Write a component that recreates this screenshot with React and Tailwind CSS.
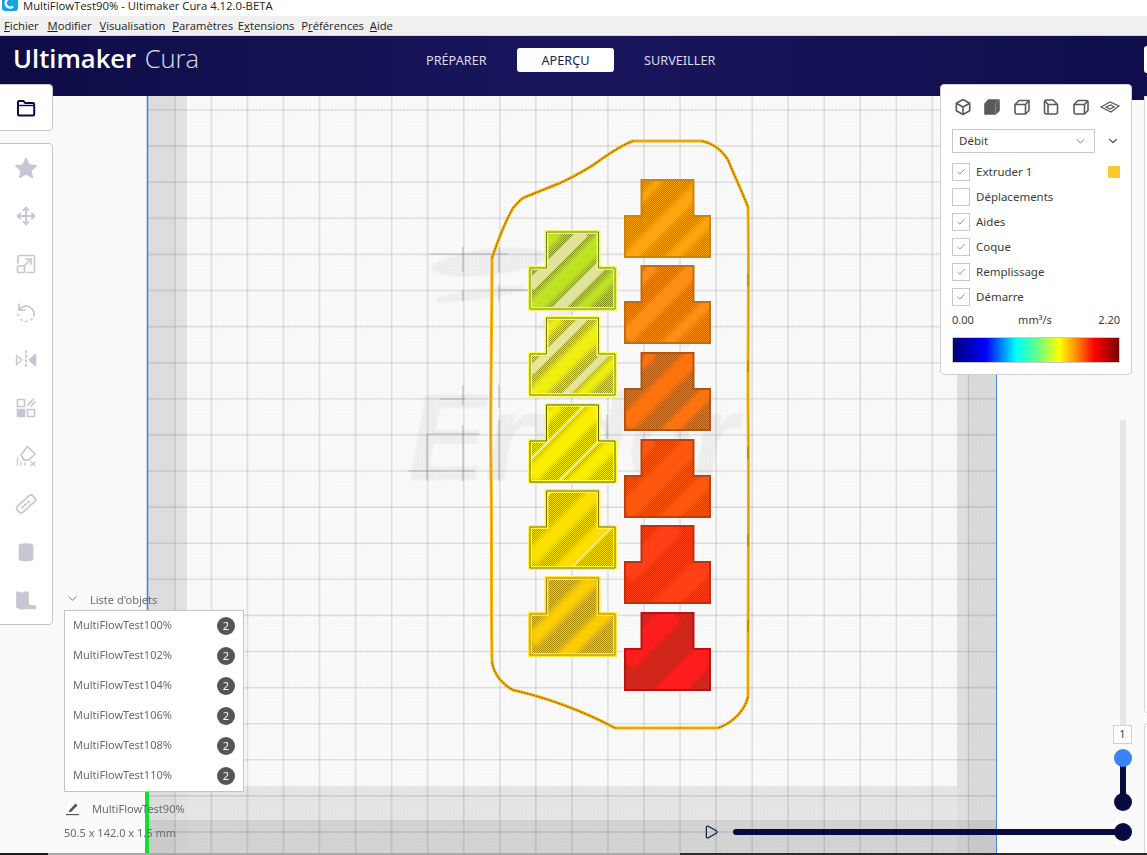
import React from 'react';
import { ChevronDown, Check, Move, Play } from 'lucide-react';

const MENU = [
  { a: 'F', rest: 'ichier', mid: '', gap: 'mr-[2px]' },
  { a: 'M', rest: 'odifier', mid: '', gap: 'mr-[1px]' },
  { a: 'V', rest: 'isualisation', mid: '', gap: '' },
  { a: 'P', rest: 'aramètres', mid: '', gap: '-mr-[2px]' },
  { a: 'E', rest: 'tensions', mid: 'x', gap: '' },
  { a: 'P', rest: 'éférences', mid: 'r', gap: '-mr-[1px]' },
  { a: 'A', rest: 'ide', mid: '', gap: '' },
];

const OBJECTS = ['100', '102', '104', '106', '108', '110'];

const LAYERS = [
  { label: 'Extruder 1', on: true, swatch: true },
  { label: 'Déplacements', on: false },
  { label: 'Aides', on: true },
  { label: 'Coque', on: true },
  { label: 'Remplissage', on: true },
  { label: 'Démarre', on: true },
];

// pieces imprimees, colonne gauche puis colonne droite
const LEFT_PARTS = [
  { x: 530, y: 232, fill: '#bfe422', light: '#eef566', dark: '#66780f', o: 0.45, bands: [[80, 16], [28, 12], [128, 10]], pale: [[54, 11, '#e2e39a'], [105, 11, '#e2e39a']] },
  { x: 530, y: 318, fill: '#eef010', light: '#f8fc5a', dark: '#66660c', o: 0.45, bands: [[82, 16], [30, 10], [128, 10]], pale: [[54, 8, '#e6e69a'], [112, 7, '#e6e69a']] },
  { x: 530, y: 405, fill: '#fbee00', light: '#fcfa46', dark: '#4d4d00', o: 0.45, bands: [[72, 16], [122, 14], [30, 10]], pale: [[55, 3, '#efeb9a'], [105, 3, '#efeb9a']] },
  { x: 530, y: 491, fill: '#fde000', light: '#fff446', dark: '#6d5f00', o: 0.42, bands: [[68, 16], [110, 14]], pale: [[22, 2, '#f0e59a'], [118, 2, '#f0e59a']] },
  { x: 530, y: 578, fill: '#fbcc00', light: '#ffe63a', dark: '#9a7800', o: 0.4, bands: [[64, 15], [112, 14]], pale: [] },
];

const RIGHT_PARTS = [
  { x: 625, y: 180, fill: '#ffa510', dark: '#c98412', o: 0.38, bands: [[82, 14], [125, 12], [35, 8]] },
  { x: 625, y: 266, fill: '#ff8e14', dark: '#bd6e18', o: 0.38, bands: [[72, 16], [120, 12], [30, 10]] },
  { x: 625, y: 353, fill: '#ff7310', dark: '#b05610', o: 0.38, bands: [[72, 18], [122, 14], [28, 10]] },
  { x: 625, y: 440, fill: '#ff5810', dark: '#bb4210', o: 0.34, bands: [[72, 20], [122, 16], [28, 12]] },
  { x: 625, y: 526, fill: '#ff3f15', dark: '#c03010', o: 0.3, bands: [[50, 20], [118, 22]] },
  { x: 625, y: 613, fill: '#ff1c1a', dark: '#b81212', o: 0.26, bands: [[48, 24], [122, 24]] },
];

const T_PATH = 'M16.5 0H68.5V36H85V77H0V36H16.5Z';
const SKIRT = 'M633 141H702C712 143 722 150 728 160C733 172 742 192 748 207C749 260 748 330 748 400C749 500 748 600 748 697C744 712 732 723 718 728H615C585 712 548 698 513 690C502 684 494 674 492 662C491 600 492 540 491 470C490 400 492 330 492 258C498 240 505 222 513 208C518 203 520 200 523 198C535 193 548 188 560 183C575 176 590 168 603 158C612 152 622 145 633 141Z';
// parties en biais de la jupe, la ou le trait parait hachure
const SKIRT_HATCHED = [
  'M492 258C498 240 505 222 513 208C518 203 520 200 523 198C535 193 548 188 560 183C575 176 590 168 603 158C612 152 622 145 633 141',
  'M702 141C712 143 722 150 728 160C733 172 742 192 748 207',
  'M748 697C744 712 732 723 718 728',
  'M615 728C585 712 548 698 513 690C502 684 494 674 492 662',
];

function Part({ part, light }) {
  return (
    <g transform={`translate(${part.x} ${part.y})`}>
      <g clipPath="url(#t-shape)">
        <rect width="86" height="78" fill={part.fill} />
        <rect width="86" height="78" fill="url(#dither)" opacity={part.o} />
        <g filter="url(#soft)">
          {part.bands.map(([c, w]) => (
            <line key={c} x1="0" y1={c} x2={c} y2="0" stroke={part.fill} strokeWidth={w} />
          ))}
        </g>
        {(part.pale || []).map(([c, w, color]) => (
          <line key={c} x1="0" y1={c} x2={c} y2="0" stroke={color} strokeWidth={w} />
        ))}
      </g>
      {light && <path d={T_PATH} fill="none" stroke={part.light} strokeWidth="4" />}
      <path d={T_PATH} fill="none" stroke={part.dark} strokeWidth={light ? 0.9 : 2} />
    </g>
  );
}

function BuildPlate() {
  const xs = Array.from({ length: 23 }, (_, i) => 175.3 + i * 36.05);
  const ys = Array.from({ length: 21 }, (_, i) => 110 + i * 36.1);
  return (
    <svg className="absolute left-0 top-[96px]" width="1147" height="759" viewBox="0 96 1147 759">
      <defs>
        <pattern id="dither" width="2" height="2" patternUnits="userSpaceOnUse">
          <rect width="1" height="1" fill="#2a2000" />
          <rect x="1" y="1" width="1" height="1" fill="#2a2000" />
        </pattern>
        <pattern id="minor" width="3.6" height="3.6" patternUnits="userSpaceOnUse">
          <rect width="3.6" height="0.6" fill="#000" opacity="0.014" />
          <rect width="0.6" height="3.6" fill="#000" opacity="0.014" />
        </pattern>
        <clipPath id="t-shape">
          <path d={T_PATH} />
        </clipPath>
        <filter id="soft" x="-20%" y="-20%" width="140%" height="140%">
          <feGaussianBlur stdDeviation="2.2" />
        </filter>
        <filter id="blur-wm" x="-20%" y="-20%" width="140%" height="140%">
          <feGaussianBlur stdDeviation="1" />
        </filter>
      </defs>

      <rect x="148" y="96" width="848" height="759" fill="#fafafa" />
      <rect x="148" y="96" width="848" height="759" fill="url(#minor)" />

      {/* zones interdites du plateau */}
      <rect x="148" y="96" width="39" height="759" fill="#000" opacity="0.09" />
      <rect x="957" y="96" width="39" height="759" fill="#000" opacity="0.1" />
      <rect x="187" y="786" width="770" height="69" fill="#000" opacity="0.08" />
      <rect x="148" y="820" width="848" height="35" fill="#000" opacity="0.08" />
      <rect x="148" y="96" width="27" height="759" fill="#000" opacity="0.02" />
      <rect x="968" y="96" width="28" height="759" fill="#000" opacity="0.02" />

      {xs.map((x) => (
        <line key={x} x1={x} y1="96" x2={x} y2="855" stroke="#000" strokeOpacity="0.1" strokeWidth="1.6" />
      ))}
      {ys.map((y) => (
        <line key={y} x1="148" y1={y} x2="996" y2={y} stroke="#000" strokeOpacity="0.1" strokeWidth="1.6" />
      ))}

      {/* filigrane sous le plateau */}
      <g opacity="0.05" filter="url(#blur-wm)">
        <ellipse cx="490" cy="262" rx="58" ry="13" fill="#222" transform="rotate(-6 490 262)" />
        <ellipse cx="480" cy="294" rx="46" ry="5" fill="#222" transform="rotate(-8 480 294)" />
        <ellipse cx="580" cy="300" rx="50" ry="8" fill="#222" transform="rotate(-35 580 300)" />
        <ellipse cx="662" cy="330" rx="32" ry="7" fill="#222" transform="rotate(30 662 330)" />
        <text x="408" y="480" textLength="330" lengthAdjust="spacingAndGlyphs" fontFamily="Liberation Sans" fontStyle="italic" fontWeight="700" fontSize="125" fill="#222">
          Ender
        </text>
      </g>
      <g stroke="#8c8c8c" strokeOpacity="0.5" strokeWidth="1.2">
        <line x1="430" y1="254" x2="508" y2="254" />
        <line x1="463" y1="247" x2="463" y2="272" />
        <line x1="499" y1="247" x2="499" y2="272" />
        <line x1="500" y1="290" x2="530" y2="290" />
        <line x1="463" y1="290" x2="463" y2="301" />
        <line x1="499" y1="285" x2="499" y2="301" />
        <line x1="440" y1="399" x2="465" y2="399" />
        <line x1="463" y1="385" x2="463" y2="405" />
        <line x1="499" y1="385" x2="499" y2="408" />
        <line x1="427" y1="434" x2="480" y2="434" />
        <line x1="427" y1="434" x2="427" y2="481" />
        <line x1="463" y1="425" x2="463" y2="481" />
        <line x1="408" y1="471" x2="475" y2="471" />
        <line x1="499" y1="420" x2="499" y2="481" />
        <line x1="607" y1="415" x2="607" y2="440" />
        <line x1="535" y1="290" x2="535" y2="300" />
      </g>

      {/* jupe */}
      <path d={SKIRT} fill="none" stroke="#f7b40a" strokeWidth="3" />
      <path d={SKIRT} fill="none" stroke="#dd9a00" strokeWidth="1" />
      {SKIRT_HATCHED.map((d) => (
        <path key={d} d={d} fill="none" stroke="#6e4a00" strokeOpacity="0.75" strokeWidth="1.1" strokeDasharray="1.5 1.5" />
      ))}
      <g stroke="#c98f00" strokeWidth="2">
        <line x1="748" y1="274" x2="748" y2="286" />
        <line x1="748" y1="360" x2="748" y2="372" />
        <line x1="748" y1="447" x2="748" y2="459" />
        <line x1="748" y1="534" x2="748" y2="546" />
        <line x1="748" y1="620" x2="748" y2="632" />
      </g>

      {LEFT_PARTS.map((p) => (
        <Part key={p.y} part={p} light />
      ))}
      {RIGHT_PARTS.map((p) => (
        <Part key={p.y} part={p} />
      ))}

      <line x1="147.5" y1="96" x2="147.5" y2="790" stroke="#3f86dd" strokeWidth="1.6" />
      <line x1="996.5" y1="96" x2="996.5" y2="855" stroke="#4a8bd8" strokeWidth="1" />
      <line x1="147" y1="789" x2="147" y2="855" stroke="#10e030" strokeWidth="4" />
    </svg>
  );
}

function ToolIcon({ children }) {
  return (
    <div className="flex h-[48px] w-full items-center justify-center">
      <svg width="24" height="24" viewBox="0 0 24 24" fill="none" stroke="#c6c6d4" strokeWidth="1.7" strokeLinecap="round" strokeLinejoin="round">
        {children}
      </svg>
    </div>
  );
}

function LeftTools() {
  return (
    <>
      <div className="absolute left-[-1px] top-[84px] flex h-[47px] w-[54px] items-center justify-center rounded-r-[4px] border border-[#c8c8c8] bg-white">
        <svg width="20" height="18" viewBox="0 0 20 18" fill="none" stroke="#0a0d45" strokeWidth="2" strokeLinejoin="round">
          <path d="M2 15.5V3.2C2 2.5 2.5 2 3.2 2H7.5L9 4H17C17.7 4 18.2 4.5 18.2 5.2V15.3C18.2 16 17.7 16.5 17 16.5H3C2.4 16.5 2 16.1 2 15.5Z" />
          <path d="M2 6.5H18" strokeWidth="1.4" />
        </svg>
      </div>
      <div className="absolute left-[-1px] top-[143px] flex h-[482px] w-[54px] flex-col rounded-r-[4px] border border-[#c8c8c8] bg-white pt-[0.5px]">
        <ToolIcon>
          <path d="M12 2.5L15 9L22 9.8L16.8 14.4L18.2 21.3L12 17.8L5.8 21.3L7.2 14.4L2 9.8L9 9Z" fill="#c6c6d4" />
        </ToolIcon>
        <div className="flex h-[48px] w-full items-center justify-center">
          <Move size={20} color="#c6c6d4" strokeWidth={2.2} />
        </div>
        <ToolIcon>
          <path d="M4 11V5C4 4 4.8 3.5 5.5 3.5H19C20 3.5 20.5 4.2 20.5 5V19C20.5 20 20 20.5 19 20.5H13" />
          <rect x="3.5" y="14" width="7" height="6.5" rx="1" />
          <path d="M10 14L17 7M12 7H17V12" />
        </ToolIcon>
        <ToolIcon>
          <path d="M5 4V10H11" />
          <path d="M5.5 9.5C8 6.5 12 5.5 15.5 7C19.5 9 21 13 19.8 16" />
          <path d="M18 19L16.5 20.2M13 21.3H11.5M8 20.2L6.5 19M4.2 15.5L3.8 13.5" strokeDasharray="1 2" />
        </ToolIcon>
        <ToolIcon>
          <path d="M12 3V21" strokeDasharray="1.5 3" strokeWidth="2" />
          <path d="M2.5 7.5L8 12L2.5 16.5Z" strokeWidth="1.3" />
          <path d="M21.5 6.5L15.5 12L21.5 17.5Z" fill="#c6c6d4" />
        </ToolIcon>
        <ToolIcon>
          <rect x="3.5" y="3.5" width="7" height="7" />
          <rect x="13.5" y="13.5" width="7" height="7" />
          <rect x="3.5" y="13.5" width="7" height="7" fill="#c6c6d4" />
          <path d="M14 9L19 3.5M17 10L21 6" />
        </ToolIcon>
        <ToolIcon>
          <path d="M13.5 2.5L21 10L15 16H10L7 11Z" />
          <path d="M3.5 14V21M7 18V21M11 19V21" strokeWidth="1.3" />
          <path d="M17 18L21 21.5M21 18L17 21.5" strokeWidth="1.3" />
        </ToolIcon>
        <ToolIcon>
          <rect x="1.5" y="8" width="21" height="8" rx="2.5" transform="rotate(-42 12 12)" />
          <path d="M8 15.5L9 14.5M11 13L12 12M14 10.5L15 9.5" strokeWidth="2" />
        </ToolIcon>
        <ToolIcon>
          <path d="M5.5 5.5C5.5 3.5 18.5 3.5 18.5 5.5V19C18.5 21 5.5 21 5.5 19Z" fill="#c6c6d4" />
        </ToolIcon>
        <ToolIcon>
          <path d="M3 4L8 5.5L12 4L14 5V16.5L17 18H21V20.5H15L12 20L8 21L3 19Z" fill="#c6c6d4" />
        </ToolIcon>
      </div>
    </>
  );
}

function ObjectList() {
  return (
    <div className="absolute left-[64px] top-[590px] w-[180px] text-[11px] text-[#6b6b6b]">
      <div className="flex h-[20px] items-center">
        <ChevronDown size={15} strokeWidth={1.4} className="ml-[1px] -mt-[3px]" />
        <span className="ml-[10px]">Liste d'objets</span>
      </div>
      <div className="flex flex-col border border-[#c4c4c4] bg-white">
        {OBJECTS.map((n) => (
          <div key={n} className="flex h-[30px] items-center justify-between pl-[8px] pr-[8px]">
            <span className="-mt-[1px]">MultiFlowTest{n}%</span>
            <span className="flex h-[18px] w-[18px] items-center justify-center rounded-full bg-[#555555] text-[11px] text-white">2</span>
          </div>
        ))}
      </div>
      <div className="mt-[7px] flex h-[20px] items-center pl-[2px]">
        <svg width="13" height="14" viewBox="0 0 13 14" fill="#555555">
          <path d="M3 8.5L9.5 1.5L11.5 3.5L5 10H3Z" />
          <rect x="0" y="12" width="13" height="1.2" />
        </svg>
        <span className="ml-[13px]">MultiFlowTest90%</span>
      </div>
      <div className="mt-[4px] leading-[20px]">50.5 x 142.0 x 1.5 mm</div>
    </div>
  );
}

function ViewIcon({ shade }) {
  return (
    <svg width="18" height="18" viewBox="0 0 18 18" fill="none" stroke="#5a5a5a" strokeWidth="1.6" strokeLinejoin="round">
      {shade === 'iso' && (
        <>
          <path d="M9 1.5L15.7 5.2V12.8L9 16.5L2.3 12.8V5.2Z" />
          <path d="M2.3 5.2L9 9L15.7 5.2M9 9V16.5" />
        </>
      )}
      {shade === 'front' && (
        <>
          <path d="M2 6L5.5 2H16V12.5L12.5 16H2Z" fill="#5a5a5a" />
          <path d="M12.5 6V16M12.5 6L16 2" stroke="#8a8a8a" strokeWidth="1" />
        </>
      )}
      {shade === 'left' && (
        <>
          <path d="M2 6.5L6 2.5H16V12.5L12.5 16H3.5C2.6 16 2 15.4 2 14.5Z" />
          <path d="M2 6.5H12.5V16M12.5 6.5L16 2.5" />
        </>
      )}
      {shade === 'top' && (
        <>
          <path d="M2.5 4C2.5 2.8 3.3 2 4.5 2H11L15.5 6.5V14C15.5 15.2 14.7 16 13.5 16H4.5C3.3 16 2.5 15.2 2.5 14Z" />
          <path d="M6 6.5H15.5M6 6.5V16M2.5 2.5L6 6.5" />
        </>
      )}
      {shade === 'right' && (
        <>
          <path d="M2 6.5L6 2.5H14C15.2 2.5 16 3.3 16 4.5V12.5L12.5 16H3.5C2.6 16 2 15.4 2 14.5Z" />
          <path d="M2 6.5H12.5V16M12.5 6.5L16 2.5" />
        </>
      )}
    </svg>
  );
}

function ViewPanel() {
  return (
    <div className="absolute left-[940px] top-[84px] flex h-[291px] w-[192px] flex-col rounded-[4px] border border-[#cfcfcf] bg-white px-[11px] text-[11.5px] text-[#3c3c3c]">
      <div className="flex h-[44px] items-center justify-between pl-[1px]">
        {['iso', 'front', 'left', 'top', 'right'].map((s) => (
          <span key={s} className="flex w-[20px] justify-center">
            <ViewIcon shade={s} />
          </span>
        ))}
        <svg width="20" height="12" viewBox="0 0 20 12" fill="none" stroke="#5a5a5a" strokeWidth="1.2">
          <path d="M1 6L10 1L19 5L11 11Z" />
          <path d="M6 6L11 4L14 6L10 8Z" />
        </svg>
      </div>
      <div className="flex items-center">
        <div className="flex h-[24px] w-[144px] items-center justify-between border border-[#c8c8c8] pl-[6px] pr-[7px]">
          <span>Débit</span>
          <ChevronDown size={13} strokeWidth={1.4} color="#555" />
        </div>
        <ChevronDown size={14} strokeWidth={1.8} color="#333" className="ml-[11px]" />
      </div>
      <div className="mt-[6px] flex flex-col">
        {LAYERS.map((l) => (
          <div key={l.label} className="flex h-[25px] items-center">
            <span className="flex h-[18px] w-[18px] items-center justify-center border border-[#c8c8c8]">
              {l.on && <Check size={10} strokeWidth={1.6} color="#555" />}
            </span>
            <span className="ml-[6px] flex-1">{l.label}</span>
            {l.swatch && <span className="h-[12px] w-[12px] bg-[#fcc92d]" />}
          </div>
        ))}
      </div>
      <div className="mt-[1px] flex h-[20px] items-center justify-between text-[11px]">
        <span>0.00</span>
        <span className="mr-[2px]">mm³/s</span>
        <span>2.20</span>
      </div>
      <div className="mt-[7px] h-[26px] w-[168px] border border-[#c8c8c8] bg-[linear-gradient(90deg,#00007a_0%,#0000ff_20%,#00ffff_38%,#5dff90_50%,#ffff00_64%,#ff9000_74%,#ff0000_85%,#7a0000_100%)]" />
    </div>
  );
}

function Sliders() {
  return (
    <>
      <div className="absolute left-[1120px] top-[420px] h-[310px] w-[6px] bg-[#e6e6e6]" />
      <div className="absolute left-[1113px] top-[725px] flex h-[19px] w-[19px] items-center justify-center border border-[#d0d0d0] bg-white text-[11px] text-[#444]">
        1
      </div>
      <div className="absolute left-[1120px] top-[758px] h-[44px] w-[6px] bg-[#070b40]" />
      <div className="absolute left-[1114px] top-[749px] h-[18px] w-[18px] rounded-full bg-[#3a82f7]" />
      <div className="absolute left-[1114px] top-[793px] h-[18px] w-[18px] rounded-full bg-[#070b40]" />
      <div className="absolute left-[733px] top-[829px] h-[6px] w-[390px] rounded-l-full bg-[#070b40]" />
      <div className="absolute left-[1114px] top-[823px] h-[18px] w-[18px] rounded-full bg-[#070b40]" />
      <Play size={16} strokeWidth={1.8} color="#12144a" className="absolute left-[703px] top-[824px]" />
      <div className="absolute left-[1144px] top-[96px] h-[617px] w-[6px] rounded-bl-[3px] border border-[#d8d8d8] bg-white" />
      <div className="absolute left-[1144px] top-[723px] h-[131px] w-[6px] rounded-tl-[3px] border border-[#d8d8d8] bg-white" />
    </>
  );
}

export default function App() {
  return (
    <div className="relative h-[855px] w-[1147px] overflow-hidden bg-[#fafafa] font-['Noto_Sans',sans-serif]">
      <div className="relative flex h-[16px] items-start overflow-hidden bg-white">
        <svg className="ml-[2px] -mt-[5px] shrink-0" width="16" height="16" viewBox="0 0 16 16">
          <rect width="16" height="16" rx="3" fill="#12a5e2" />
          <path d="M11 4.5A4.5 4.5 0 1 0 11 11.5" fill="none" stroke="#fff" strokeWidth="2.4" />
        </svg>
        <span className="ml-[5px] whitespace-nowrap font-['Open_Sans',sans-serif] text-[11.3px] leading-[12px] text-[#222]">
          MultiFlowTest90% - Ultimaker Cura 4.12.0-BETA
        </span>
      </div>

      <div className="flex h-[20px] items-center gap-[6.8px] border-b border-[#d2d2da] bg-[#f0f0f0] pl-[4px] pt-[1px] font-['Open_Sans',sans-serif] text-[11.25px] text-[#1c1c1c]">
        {MENU.map(({ a, rest, mid, gap }) => (
          <span key={a + rest} className={gap}>
            {mid === '' && <span className="underline">{a}</span>}
            {mid === 'x' && (
              <>
                E<span className="underline">x</span>
              </>
            )}
            {mid === 'r' && (
              <>
                P<span className="underline">r</span>
              </>
            )}
            {rest}
          </span>
        ))}
      </div>

      <div className="relative flex h-[60px] items-center bg-[linear-gradient(90deg,#0d0c46,#1a165e_50%,#0f0e4c)]">
        <div className="ml-[13px] -mt-[15px] flex items-baseline font-['Open_Sans',sans-serif] text-[25.6px] leading-none text-white">
          <span className="font-semibold">Ultimaker</span>
          <span className="ml-[8.5px] font-light text-[#dfe0ee]">Cura</span>
        </div>
        <div className="absolute left-[426px] top-[12px] flex h-[24px] items-center text-[12.7px] text-[#dcdcec]">
          <span className="w-[91px] pt-[1px]">PRÉPARER</span>
          <span className="flex h-[24px] w-[97px] items-center justify-center rounded-[3px] bg-white pt-[1px] text-[#1c1c52]">APERÇU</span>
          <span className="ml-[30px] pt-[1px]">SURVEILLER</span>
        </div>
        <div className="absolute right-[-4px] top-[10px] h-[27px] w-[7px] rounded-l-[3px] bg-white" />
        <div className="absolute bottom-[-4px] right-[3px] h-[4px] w-[12px] bg-[#0f0e4c]" />
      </div>

      <BuildPlate />
      <LeftTools />
      <ObjectList />
      <ViewPanel />
      <Sliders />

      <div className="absolute bottom-0 left-0 flex h-[2px] w-full">
        <div className="w-[48px] bg-[#1c1c1c]" />
        <div className="w-[632px] bg-[#a8a8a8]" />
        <div className="flex-1 bg-[#2c2c2c]" />
      </div>
    </div>
  );
}
